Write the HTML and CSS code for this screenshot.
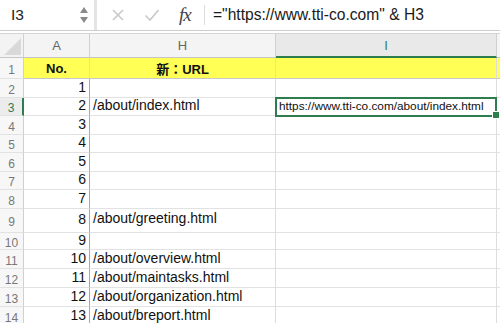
FILE: index.html
```html
<!DOCTYPE html>
<html lang="ja">
<head>
  <meta charset="UTF-8" />
  <title>Sheet</title>
  <link rel="stylesheet" href="styles.css">
</head>
<body>
  <!-- formula bar -->
  <div class="formula-bar">
    <div class="name-box">
      <span class="ref">I3</span>
      <span class="spin"><i class="up"></i><i class="down"></i></span>
    </div>
    <div class="tools">
      <span class="tool x">
        <svg width="14" height="14" viewBox="0 0 14 14"><path d="M2 2 L12 12 M12 2 L2 12" stroke="#c9c9c9" stroke-width="1.6" fill="none"/></svg>
      </span>
      <span class="tool ok">
        <svg width="16" height="14" viewBox="0 0 16 14"><path d="M1.5 7.5 L6 12 L14.5 2" stroke="#c9c9c9" stroke-width="1.6" fill="none"/></svg>
      </span>
      <span class="tool fx">fx</span>
    </div>
    <div class="formula">="https://www.tti-co.com" &amp; H3</div>
  </div>

  <!-- grid -->
  <div class="sheet">
    <div class="corner"><span class="tri"></span></div>
    <div class="col-head">A</div>
    <div class="col-head">H</div>
    <div class="col-head active">I</div>
    <div class="col-head rest"></div>

    <div class="row-head">1</div>
    <div class="cell yellow bold center">No.</div>
    <div class="cell yellow bold center">新：URL</div>
    <div class="cell yellow"></div>
    <div class="cell yellow"></div>

    <div class="row-head">2</div>
    <div class="cell num">1</div>
    <div class="cell"></div>
    <div class="cell"></div>
    <div class="cell"></div>

    <div class="row-head active">3</div>
    <div class="cell num">2</div>
    <div class="cell">/about/index.html</div>
    <div class="cell selected small">https://www.tti-co.com/about/index.html</div>
    <div class="cell"></div>

    <div class="row-head">4</div>
    <div class="cell num">3</div>
    <div class="cell"></div>
    <div class="cell"></div>
    <div class="cell"></div>

    <div class="row-head">5</div>
    <div class="cell num">4</div>
    <div class="cell"></div>
    <div class="cell"></div>
    <div class="cell"></div>

    <div class="row-head">6</div>
    <div class="cell num">5</div>
    <div class="cell"></div>
    <div class="cell"></div>
    <div class="cell"></div>

    <div class="row-head">7</div>
    <div class="cell num">6</div>
    <div class="cell"></div>
    <div class="cell"></div>
    <div class="cell"></div>

    <div class="row-head">8</div>
    <div class="cell num">7</div>
    <div class="cell"></div>
    <div class="cell"></div>
    <div class="cell"></div>

    <div class="row-head">9</div>
    <div class="cell num">8</div>
    <div class="cell alt">/about/greeting.html</div>
    <div class="cell"></div>
    <div class="cell"></div>

    <div class="row-head">10</div>
    <div class="cell num">9</div>
    <div class="cell"></div>
    <div class="cell"></div>
    <div class="cell"></div>

    <div class="row-head">11</div>
    <div class="cell num">10</div>
    <div class="cell">/about/overview.html</div>
    <div class="cell"></div>
    <div class="cell"></div>

    <div class="row-head">12</div>
    <div class="cell num">11</div>
    <div class="cell">/about/maintasks.html</div>
    <div class="cell"></div>
    <div class="cell"></div>

    <div class="row-head">13</div>
    <div class="cell num">12</div>
    <div class="cell">/about/organization.html</div>
    <div class="cell"></div>
    <div class="cell"></div>

    <div class="row-head">14</div>
    <div class="cell num">13</div>
    <div class="cell">/about/breport.html</div>
    <div class="cell"></div>
    <div class="cell"></div>
  </div>
</body>
</html>
```

FILE: styles.css
```css
body {
  margin: 0;
  background: #fff;
  font-family: 'Liberation Sans', Arial, 'Noto Sans CJK JP', sans-serif;
  color: #111;
  overflow: hidden;
}

/* formula bar */
.formula-bar {
  display: flex;
  height: 30px;
  border-bottom: 1px solid #cdcdcd;
  box-shadow: 0 2px 0 #fff, 0 3px 0 #d4d4d4;
  margin-bottom: 3px;
}

.name-box {
  width: 97px;
  box-sizing: border-box;
  display: flex;
  align-items: center;
  justify-content: space-between;
  padding: 0 6px 0 11px;
  border-right: 3px solid #e4e4e4;
}

.ref {
  font-size: 15.5px;
  color: #222;
}

.spin {
  display: flex;
  flex-direction: column;
  gap: 4px;
}

.spin i {
  width: 0;
  height: 0;
  border-left: 4px solid transparent;
  border-right: 4px solid transparent;
}

.spin .up { border-bottom: 6px solid #8a8a8a; }
.spin .down { border-top: 6px solid #8a8a8a; }

.tools {
  width: 107px;
  display: flex;
  align-items: center;
  border-right: 1px solid #dcdcdc;
  margin: 5px 0;
}

.tool {
  display: flex;
  align-items: center;
}

.tool.x { margin-left: 14px; }
.tool.ok { margin-left: 19px; }

.tool.fx {
  margin-left: 19px;
  font-family: 'Liberation Serif', serif;
  font-style: italic;
  font-size: 19px;
  color: #444;
  letter-spacing: -1px;
}

.formula {
  padding-left: 8px;
  display: flex;
  align-items: center;
  font-size: 15.6px;
  color: #1a1a1a;
}

/* sheet */
.sheet {
  display: grid;
  grid-template-columns: 24px 66px 186px 221px 1fr;
  grid-template-rows: 24px 21px 19px 18px 19px 18px 19px 18px 19px 24px 17px 19px 19px 19px 19px;
}

.corner {
  background: #f3f3f3;
  border-right: 1px solid #d0d0d0;
  border-bottom: 1px solid #c6c6c6;
  position: relative;
}

.tri {
  position: absolute;
  right: 2px;
  bottom: 2px;
  width: 0;
  height: 0;
  border-left: 17px solid transparent;
  border-bottom: 17px solid #d9d9d9;
}

.col-head {
  background: #f4f4f4;
  border-right: 1px solid #d0d0d0;
  border-bottom: 1px solid #c6c6c6;
  display: flex;
  align-items: center;
  justify-content: center;
  font-size: 13px;
  color: #666;
}

.col-head.active {
  background: #e9e9e9;
  color: #2e7d4f;
  border-bottom: 2px solid #2e7d4f;
}

.col-head.rest { border-right: none; }

.row-head {
  background: #f7f7f7;
  border-right: 1px solid #d0d0d0;
  border-bottom: 1px solid #e2e2e2;
  display: flex;
  align-items: center;
  justify-content: center;
  padding-top: 3px;
  font-size: 12px;
  color: #777;
}

.row-head.active {
  color: #2e7d4f;
  background: #ececec;
  border-right: 2px solid #2e7d4f;
}

.cell {
  border-right: 1px solid #dcdcdc;
  border-bottom: 1px solid #e2e2e2;
  display: flex;
  align-items: center;
  padding: 0 3px 3px;
  font-size: 14px;
  white-space: nowrap;
  overflow: hidden;
  min-width: 0;
}

.cell.num {
  justify-content: flex-end;
  border-right: 1px solid #a8a8a8;
}

.cell.center { justify-content: center; }
.cell.bold { font-weight: bold; font-size: 13px; padding-bottom: 0; }
.cell.yellow { background: #ffff55; border-bottom-color: #c8c8c8; }
.cell.small { font-size: 11.8px; padding-bottom: 1px; }
.cell.alt { font-size: 14px; padding-bottom: 5px; }

.cell.selected {
  position: relative;
  overflow: visible;
}

.cell.selected::before {
  content: '';
  position: absolute;
  left: -1px;
  top: -1px;
  right: -1px;
  bottom: -2px;
  border: 2px solid #2e7d4f;
}

.cell.selected::after {
  content: '';
  position: absolute;
  right: -4px;
  bottom: -4px;
  width: 6px;
  height: 6px;
  background: #2e7d4f;
  border: 1px solid #fff;
}
```
